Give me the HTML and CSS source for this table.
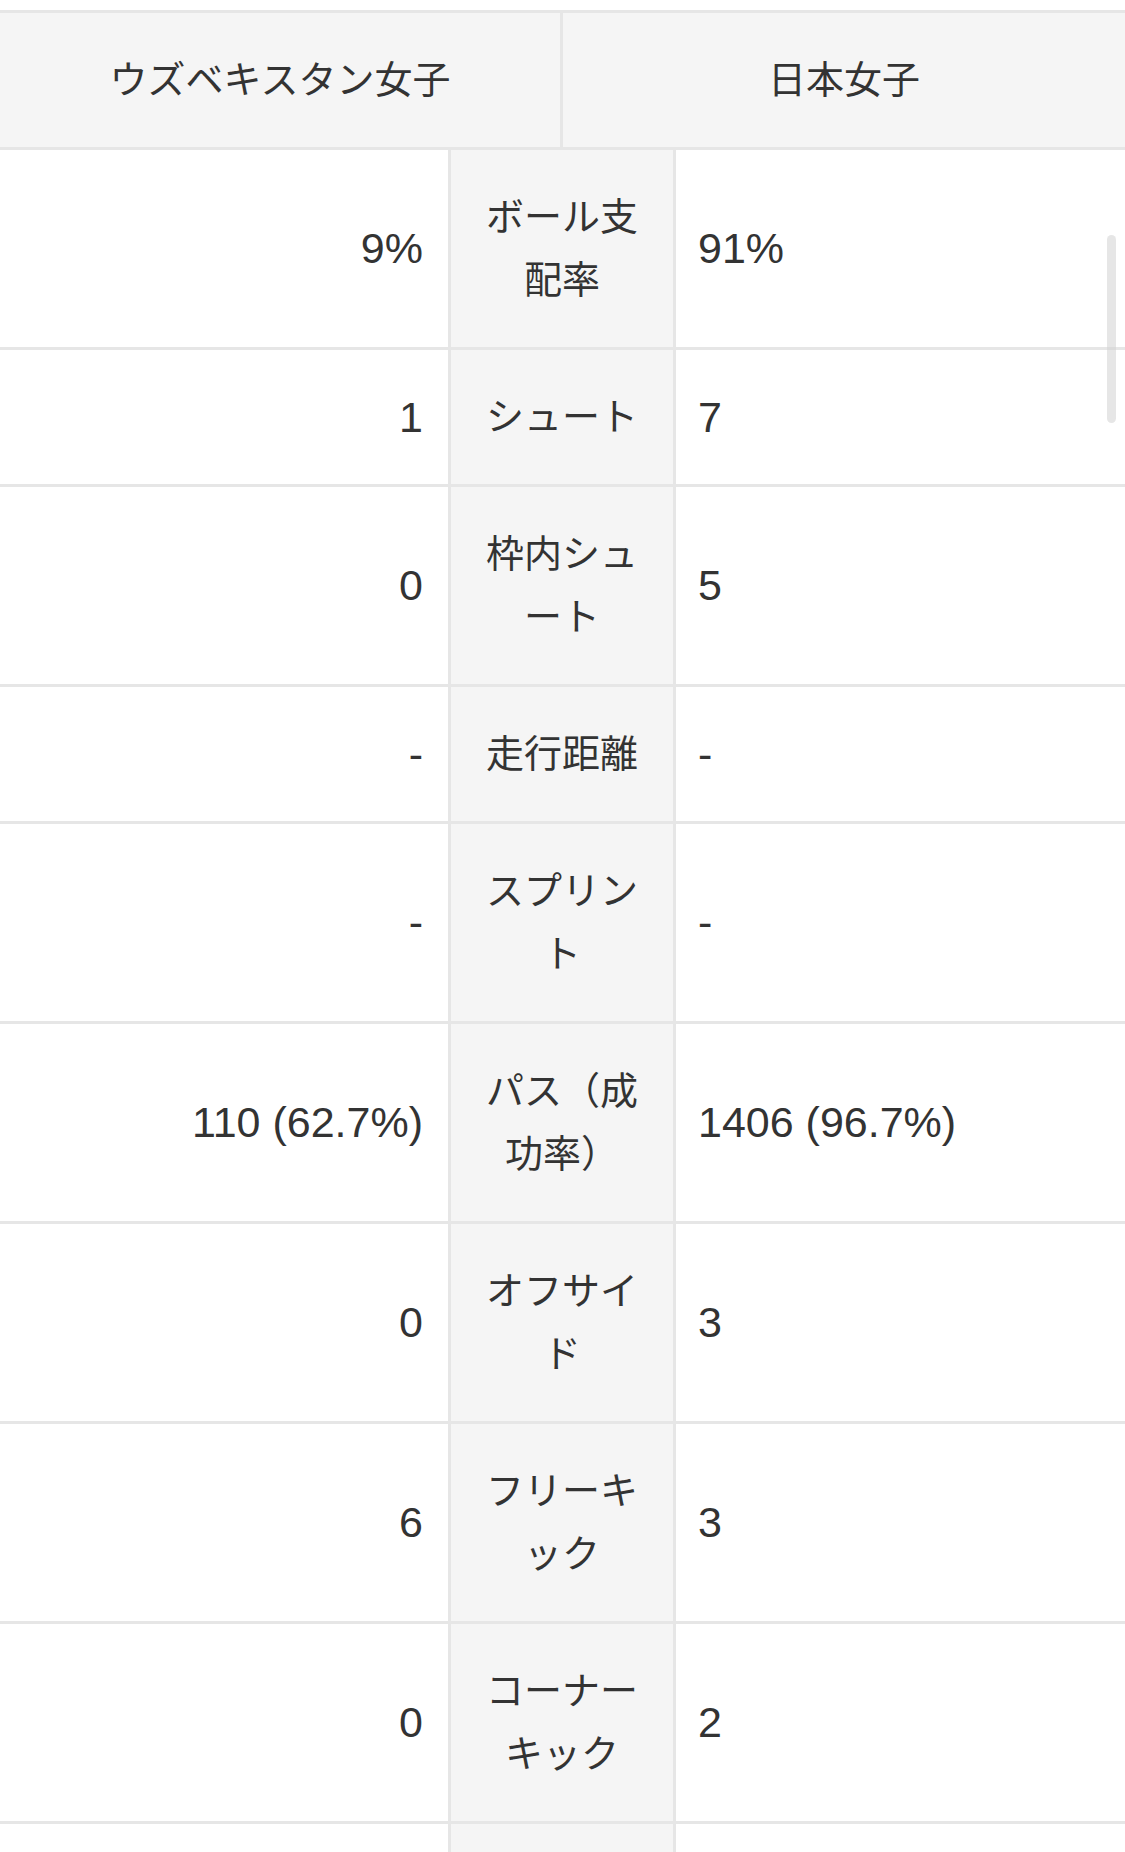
FILE: index.html
```html
<!DOCTYPE html>
<html lang="ja">
<head>
<meta charset="utf-8">
<title>スタッツ</title>
<link rel="stylesheet" href="styles.css">
</head>
<body>
<div class="stats">
  <div class="head">
    <div class="team home">ウズベキスタン女子</div>
    <div class="team away">日本女子</div>
  </div>
  <div class="row"><div class="val home">9%</div><div class="label">ボール支配率</div><div class="val away">91%</div></div>
  <div class="row"><div class="val home">1</div><div class="label">シュート</div><div class="val away">7</div></div>
  <div class="row"><div class="val home">0</div><div class="label">枠内シュート</div><div class="val away">5</div></div>
  <div class="row"><div class="val home">-</div><div class="label">走行距離</div><div class="val away">-</div></div>
  <div class="row"><div class="val home">-</div><div class="label">スプリント</div><div class="val away">-</div></div>
  <div class="row"><div class="val home">110 (62.7%)</div><div class="label">パス（成功率）</div><div class="val away">1406 (96.7%)</div></div>
  <div class="row"><div class="val home">0</div><div class="label">オフサイド</div><div class="val away">3</div></div>
  <div class="row"><div class="val home">6</div><div class="label">フリーキック</div><div class="val away">3</div></div>
  <div class="row"><div class="val home">0</div><div class="label">コーナーキック</div><div class="val away">2</div></div>
  <div class="row row-empty"><div class="val home"></div><div class="label"></div><div class="val away"></div></div>
</div>
<div class="scroll-indicator"></div>
</body>
</html>
```

FILE: styles.css
```css
html, body {
  margin: 0;
  padding: 0;
  background: #ffffff;
}

body {
  color: #333333;
  font-family: "Noto Sans CJK JP", "Noto Sans", sans-serif;
}

.stats {
  margin-top: 10px;
  border-top: 3px solid #e6e6e6;
}

.head {
  display: grid;
  grid-template-columns: 563px 1fr;
  background: #f5f5f5;
  border-bottom: 3px solid #e6e6e6;
}

.team {
  box-sizing: border-box;
  font-size: 38px;
  line-height: 63px;
  padding: 32px 0 39px;
  text-align: center;
}

.team.home {
  border-right: 3px solid #e6e6e6;
}

.row {
  display: grid;
  grid-template-columns: 448px 228px 1fr;
  border-bottom: 3px solid #e6e6e6;
}

.row-empty {
  min-height: 134px;
}

.label {
  box-sizing: border-box;
  background: #f5f5f5;
  border-left: 3px solid #e6e6e6;
  border-right: 3px solid #e6e6e6;
  padding: 32px 30px 39px;
  font-size: 38px;
  line-height: 63px;
  text-align: center;
  line-break: anywhere;
}

.val {
  display: flex;
  align-items: center;
  font-family: "Liberation Sans", "Noto Sans CJK JP", sans-serif;
  font-size: 43px;
  white-space: nowrap;
}

.val.home {
  justify-content: flex-end;
  padding-right: 25px;
}

.val.away {
  justify-content: flex-start;
  padding-left: 22px;
}

.scroll-indicator {
  position: fixed;
  top: 235px;
  right: 9px;
  width: 9px;
  height: 188px;
  border-radius: 5px;
  background: rgba(210, 210, 210, 0.55);
}
```
